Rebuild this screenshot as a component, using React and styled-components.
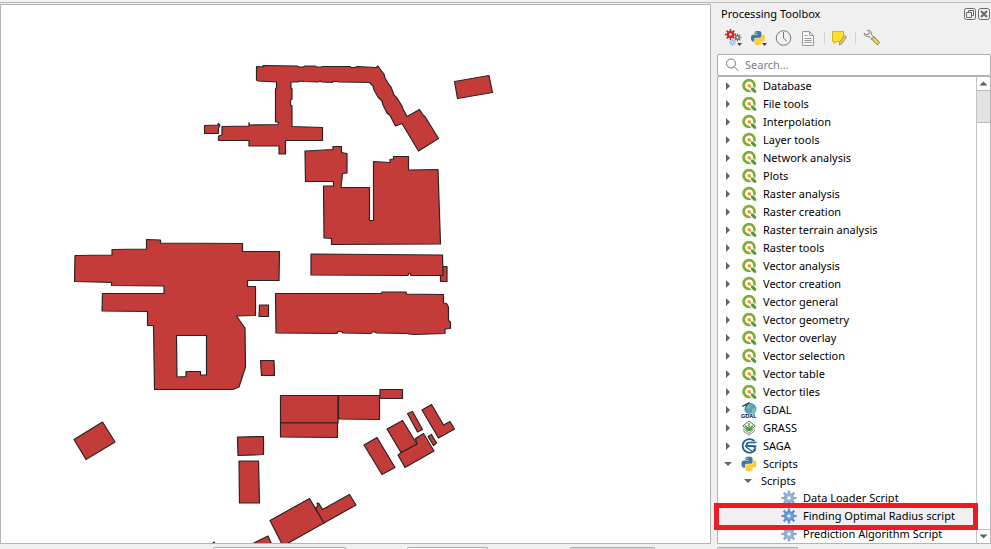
import React from "react";
import styled, { createGlobalStyle } from "styled-components";

const GlobalStyle = createGlobalStyle`
  * { box-sizing: border-box; }
  body {
    margin: 0;
    background: #f0f0f0;
    color: #000;
    font-family: "Noto Sans", "Open Sans", sans-serif;
    font-size: 11px;
  }
  button, input { font: inherit; color: inherit; }
`;

const Window = styled.div`
  display: flex;
  flex-direction: column;
  height: 100vh;
  overflow: hidden;
`;

const TopEdge = styled.div`
  flex: none;
  height: 4px;
  border-top: 2px solid #f0f0f0;
  box-shadow: inset 0 1px #b9b9b9;
`;

const Workspace = styled.div`
  display: flex;
  flex: 1;
  min-height: 0;
  gap: 6px;
`;

const MapCanvas = styled.main`
  flex: 1;
  min-width: 0;
  background: #fff;
  border: 1px solid #b4b4b4;
  overflow: hidden;
`;

const MapDrawing = styled.svg`
  display: block;
  width: 100%;
  height: 100%;
  fill: #c43c39;
  stroke: #2b2424;
  stroke-width: 1.2;
  stroke-linejoin: round;
`;

const Panel = styled.aside`
  display: flex;
  flex-direction: column;
  flex: none;
  width: 274px;
`;

const PanelHeader = styled.header`
  display: flex;
  align-items: center;
  height: 20px;
  padding: 0 1px 0 4px;
  gap: 2px;
`;

const PanelTitle = styled.h1`
  flex: 1;
  margin: 0;
  font-size: 11px;
  font-weight: 400;
  line-height: 18px;
`;

const IconButton = styled.button`
  display: flex;
  flex: none;
  align-items: center;
  justify-content: center;
  width: ${(p) => p.$size}px;
  height: ${(p) => p.$size}px;
  padding: 0;
  border: 0;
  background: none;
`;

const Toolbar = styled.div`
  display: flex;
  align-items: center;
  height: 30px;
  padding: 0 5px 2px;
  gap: 1px;
`;

const Separator = styled.span`
  width: 1px;
  height: 12px;
  margin: 0 2px;
  background: #d2d2d2;
`;

const SearchBox = styled.label`
  display: flex;
  align-items: center;
  flex: none;
  gap: 6px;
  height: 22px;
  padding: 0 7px;
  border: 1px solid #adadad;
  border-radius: 2px;
  background: #fff;
`;

const SearchInput = styled.input`
  flex: 1;
  min-width: 0;
  padding: 0;
  border: 0;
  outline: 0;
  background: none;
  line-height: 18px;
  &::placeholder { color: #7d7d7d; opacity: 1; }
`;

const TreeFrame = styled.div`
  display: flex;
  flex: 1;
  min-height: 0;
  border: 1px solid #b4b4b4;
  background: #fff;
`;

const Tree = styled.ul`
  flex: 1;
  min-width: 0;
  margin: 0;
  padding: 0;
  list-style: none;
  overflow-x: visible;
  overflow-y: clip;
`;

const TreeItem = styled.li`
  position: relative;
`;

const TreeRow = styled.button`
  display: flex;
  align-items: center;
  width: 100%;
  height: ${(p) => (p.$compact ? 16 : 18)}px;
  padding: 0 0 0 ${(p) => p.$indent}px;
  gap: 6px;
  border: 0;
  background: ${(p) => (p.$selected ? "#f0f0f0" : "none")};
  line-height: 16px;
  text-align: left;
  white-space: nowrap;
`;

const Arrow = styled.svg`
  flex: none;
  width: 12px;
  height: 12px;
  fill: #646464;
`;

const RowIcon = styled.svg`
  flex: none;
  width: 16px;
  height: 16px;
`;

const Highlight = styled.span`
  position: absolute;
  z-index: 1;
  inset: -4px -2px -5px -4px;
  border: 5px solid #ed1c24;
  pointer-events: none;
`;

const ScrollBar = styled.div`
  display: flex;
  flex-direction: column;
  flex: none;
  width: 14px;
  border-left: 1px solid #c4c4c4;
  background: #fff;
`;

const ScrollThumb = styled.div`
  height: 33px;
  border: solid #b9b9b9;
  border-width: 1px 0;
  background: #e3e3e3;
`;

const ScrollTrack = styled.div`
  flex: 1;
  border-bottom: 1px solid #c4c4c4;
`;

const StatusBar = styled.footer`
  display: grid;
  flex: none;
  grid-template-columns: 213px 133px 61px 81px 82px 85px 62px 81px 1fr;
  height: 5px;
  padding-top: 3px;
`;

const StatusField = styled.div`
  grid-column: ${(p) => p.$column};
  border: 1px solid #ababab;
  border-bottom: 0;
  border-radius: 2px 2px 0 0;
  background: ${(p) => (p.$raised ? "#dcdcdc" : "#fff")};
`;

const buildings = [
  "256.5,66.5 263,67 263,65.5 297,66 299,67 303,67 305,66 315,66 317,67 321,67 323,66.5 350,66.5 351,67.5 355,67.5 357,66.5 376,67.5 378,66 380,69 384,74 385,78 388,83 391,87 394,95 397,98 402,106 403,109 407,116.5 419.5,109.5 423,115 425,116.5 438.5,138.5 418.5,151 402,123.5 395.5,126 390,115.5 387,113 383,105 382,101 378,97 374,90 373,86 369.5,82.5 339,82 337,81.5 333,81.5 332,82.5 322,82 320,81 318,82 304,81.5 300,81 298,82 291,82 291,88 292,89 292,99 290.5,100 290.5,105 292,106 292,126.5 322.5,127.5 322.5,140.5 285.5,140.5 285.5,154 279,154 279,146 249,146 249,140.5 218.5,140.5 218.5,136 222,135 222,126.5 249,126 249,122.5 249.5,125 278,124.5 278.5,122 275.5,122 275.5,89 276.5,88 276.5,82 258,81 256.5,80",
  "204.5,125.5 218,125 218,123.5 220,125 218.5,128 218.5,133.5 204.5,133.5",
  "305,151 333,149.5 333,146.5 341.5,146.5 341.5,152.5 347,153.5 347,173 342.5,173.5 341,187.5 369.5,187.5 369.5,220.5 373.5,220.5 373.5,161.5 390,162.5 390,159.5 393.5,159 393.5,156.5 408.5,156.5 408.5,170 438,169.5 440.5,244 331.5,244.5 331.5,238.5 324,238 323.5,186 333.5,186 333.5,181.5 305.5,181.5",
  "454.5,81.5 489,75.5 492.5,92.5 457.5,98.5",
  "259.5,305 268.5,305 268.5,316.5 259,316.5",
  "260.5,360.5 274,360.5 274.5,375.5 261.5,375.5",
  "443,266.5 447,266.5 447,281.5 440.5,281.5 440.5,274",
  "311,254 442.5,255 443,275.5 411,275.5 410.5,273.5 408.5,273.5 408,275.5 311,275",
  "275.5,293.5 381.5,293.5 382,292 406,292 406.5,294 443.5,294.5 443.5,303 446.5,303.5 448.5,307 448.5,320.5 450.5,322 450.5,328.5 445,329 445,333.5 414,334.5 409,334 408,333.5 376.5,333 375,332 372,332 371,333.5 343,333 341.5,331.5 338,331.5 337,333.5 276,333",
  "280.5,395.5 338,395.5 338,423 280.5,423",
  "280.5,423 337.5,423 337.5,437.5 280.5,437",
  "338.5,395.5 379.5,395.5 379.5,419.5 338.5,419",
  "380,389.5 402.5,389.5 402.5,398.5 380,398.5",
  "364,445 377,437.5 395,467.5 382,474.5",
  "398,455 402,452 417,444 415.5,438.5 423.5,433.5 434,451 405,467.5",
  "387,429 402.5,420.5 417,444 401,452.5",
  "428,436.5 431.5,434.5 436.5,443 433.5,445.5",
  "407.5,413.5 412.5,411.5 422.5,429.5 417.5,432",
  "422,410 431.5,404.5 443.5,425 450,421.5 454.5,429 438.5,438",
  "270,520.5 309.5,498.5 324,523 283,546",
  "324,523 315.5,508 318,506 317,503 319,503.5 322.5,509.5 349.5,494.5 356,505",
  "74,439.5 102.5,422 115,442 86,459.5",
  "237.5,437 263.5,436.5 263.5,454.5 238,455.5",
  "239,461 258.5,461 259.5,503 239.5,503",
  "250,545 268,536 272,545",
  "212,544 214,542 215,544",
];

const courtyardBlock =
  "M75 255.5L112 255V249.5L146.5 249V239.5L160.5 240V243L242.5 243.5V251.5H279.5L279 280.5H247.5V286.5H255.5V315.5L236.5 316L245 328L245.5 367L239 387L233 389.5H154.5L153.5 325.5H147.5V311.5L102 311L102.5 293.5H164V286L111.5 285.5V282.5L74.5 281.5Z M176.5 335.5H206.5V375H200.5V371.5H186V376.5L177 377Z";

function gearPath(cx, cy, outer, inner, hole, teeth) {
  const step = (Math.PI * 2) / teeth;
  const at = (r, a) => `${(cx + r * Math.sin(a)).toFixed(2)} ${(cy - r * Math.cos(a)).toFixed(2)}`;
  let d = "";
  for (let i = 0; i < teeth; i += 1) {
    const a = i * step;
    d += `${i ? "L" : "M"}${at(inner, a - step * 0.26)}L${at(outer, a - step * 0.2)}L${at(outer, a + step * 0.2)}L${at(inner, a + step * 0.26)}`;
  }
  return `${d}Z M${cx - hole} ${cy}a${hole} ${hole} 0 1 0 ${hole * 2} 0a${hole} ${hole} 0 1 0 ${-hole * 2} 0Z`;
}

const snake =
  "M14.25.18l.9.2.73.26.59.3.45.32.34.34.25.34.16.33.1.3.04.26.02.2-.01.13V8.5l-.05.63-.13.55-.21.46-.26.38-.3.31-.33.25-.35.19-.35.14-.33.1-.3.07-.26.04-.21.02H8.77l-.69.05-.59.14-.5.22-.41.27-.33.32-.27.35-.2.36-.15.37-.1.35-.07.32-.04.27-.02.21v3.06H3.17l-.21-.03-.28-.07-.32-.12-.35-.18-.36-.26-.36-.36-.35-.46-.32-.59-.28-.73-.21-.88-.14-1.05-.05-1.23.06-1.22.16-1.04.24-.87.32-.71.36-.57.4-.44.42-.33.42-.24.4-.16.36-.1.32-.05.24-.01h.16l.06.01h8.16v-.83H6.18l-.01-2.75-.02-.37.05-.34.11-.31.17-.28.25-.26.31-.23.38-.2.44-.18.51-.15.58-.12.64-.1.71-.06.77-.04.84-.02 1.27.05zm-6.3 1.98l-.23.33-.08.41.08.41.23.34.33.22.41.09.41-.09.33-.22.23-.34.08-.41-.08-.41-.23-.33-.33-.22-.41-.09-.41.09z";

const PythonMark = () => (
  <>
    <path d={snake} fill="#3d78aa" />
    <path d={snake} fill="#fdc93a" transform="rotate(180 12 12)" />
  </>
);

const PythonIcon = () => (
  <RowIcon viewBox="-1 -1 26 26"><PythonMark /></RowIcon>
);

const QgisIcon = () => (
  <RowIcon viewBox="0 0 16 16">
    <circle cx="8" cy="7.5" r="5.4" fill="#fff" stroke="#7fae2c" strokeWidth="2.8" />
    <path d="M7.5 7.5h4L15.500 12v3.500h-3.300L7.500 11z" fill="#fff" />
    <path d="M10 9.500h2.200l3 3.200v2.100h-2.300L10 11.700z" fill="#589632" />
    <path d="M8.500 8.200h1.800v2.200l-1.800-1z" fill="#b5cf6a" />
    <rect x="6.700" y="6.200" width="3" height="3" rx="0.800" fill="#f08a2c" />
  </RowIcon>
);

const GdalIcon = () => (
  <RowIcon viewBox="0 0 16 16">
    <circle cx="9.5" cy="7" r="6" fill="#4aa3cf" />
    <path d="M6 3.5l3-1 1.5 2L8 7 5 6zM11 7l3-1 1 2-2 3h-2z" fill="#8cbf88" />
    <path d="M1 4.5L5 2.5M5 2.5L8.5 0.7M4 2l2 2" stroke="#333" strokeWidth="1.3" />
    <path d="M5 4l-1 5" stroke="#777" />
    <text x="0" y="15.5" fontFamily="Liberation Sans, sans-serif" fontSize="5.5" fontWeight="700" fill="#000" stroke="#fff" strokeWidth="0.8" paintOrder="stroke">GDAL</text>
  </RowIcon>
);

const GrassIcon = () => (
  <RowIcon viewBox="0 0 16 16" fill="none">
    <path d="M8 1l6.300 5L8 11 1.700 6z" fill="#f1f5ee" stroke="#6b6b6b" />
    <path d="M2 8.500l6 4.700 6-4.700M2 10.500l6 4.700 6-4.700" stroke="#8a8a8a" />
    <path d="M8 11V3M7.300 11C7 8 6 6.500 4 5.500M8.700 11C9 8 10 6.500 12 5.500M7.500 11l-3-2.700M8.500 11l3-2.700" stroke="#3f9b3c" strokeWidth="1.300" />
  </RowIcon>
);

const SagaIcon = () => (
  <RowIcon viewBox="0 0 16 16" fill="none" stroke="#1f5d93">
    <path d="M13.500 3A7 6.800 0 1 0 14.500 11.500" strokeWidth="1.800" />
    <path d="M15.500 4.500H8.500C5 4.500 5 7.600 8 8l4.500.5C15 9 14.500 12 12 12" strokeWidth="1.600" />
    <path d="M4 8h11.500M5 9l6.500 4.500" strokeWidth="1.300" />
  </RowIcon>
);

const GearIcon = ({ active }) => (
  <RowIcon viewBox="0 0 16 16">
    <path d={gearPath(8, 8, 7.6, 5.2, 1.8, 8)} fillRule="evenodd" fill={active ? "#5290d0" : "#82a6d4"} />
    <circle cx="8" cy="8" r="3.300" fill="none" stroke={active ? "#75aae0" : "#a3bfe2"} />
  </RowIcon>
);

const Caret = ({ x, y }) => <path d={`M${x} ${y}h5l-2.500 3z`} fill="#444" />;

const ModelsIcon = () => (
  <svg width="22" height="22" viewBox="0 0 22 22">
    <path d={gearPath(7.5, 7.5, 5.6, 3.9, 1.3, 8)} fillRule="evenodd" fill="#cf2b2b" />
    <path d={gearPath(14.5, 10.5, 4, 2.7, 1, 8)} fillRule="evenodd" fill="#787878" />
    <path d={gearPath(9.5, 15.5, 3.5, 2.4, 0.9, 8)} fillRule="evenodd" fill="#a5bfe6" />
    <Caret x={14} y={16} />
  </svg>
);

const PythonToolIcon = () => (
  <svg width="22" height="22" viewBox="0 0 22 22">
    <svg x="3" y="4" width="14" height="14" viewBox="0 0 24 24"><PythonMark /></svg>
    <Caret x={14} y={16} />
  </svg>
);

const HistoryIcon = () => (
  <svg width="22" height="22" viewBox="0 0 22 22" fill="none" stroke="#777">
    <circle cx="10.500" cy="11" r="7.300" />
    <path d="M10.500 5v6l3 3" />
  </svg>
);

const ResultsIcon = () => (
  <svg width="22" height="22" viewBox="0 0 22 22" fill="#f6f6f6" stroke="#9a9a9a">
    <path d="M4.500 4.500h7l4 4v10h-11zM11.500 4.500v4h4" />
    <path d="M6.500 8.500h3M6.500 11.500h7M6.500 13.500h7M6.500 15.500h7" />
  </svg>
);

const NoteIcon = () => (
  <svg width="22" height="22" viewBox="0 0 22 22">
    <path d="M3.500 4.500h11v10H8l-3 2v-2H3.500z" fill="#fbe02e" stroke="#d9b416" />
    <path d="M15.500 8.500l2 1.500-5 7-2.200 1 .2-2.500z" fill="#e8c766" stroke="#97813f" strokeWidth="0.8" />
  </svg>
);

const WrenchIcon = () => (
  <svg width="22" height="22" viewBox="0 0 22 22">
    <path d="M4 6.500C4.500 9 7 10 9 9.500l3 2.800 2-2-2.700-3C12 5 10 3 7.500 3.200L9.500 5.200 9 7l-2.200.7z" fill="#eee" stroke="#777" strokeWidth="0.9" />
    <path d="M11.500 12l2.500-2.500 5.500 6-2 2.500z" fill="#e9cf5b" stroke="#806f35" strokeWidth="0.9" />
  </svg>
);

const FrameButtonIcon = ({ kind }) => (
  <svg width="12" height="12" viewBox="0 0 12 12" fill="none" stroke="#6a6a6a">
    <rect x="0.5" y="0.5" width="11" height="11" rx="2" />
    {kind === "float" ? (
      <path d="M4.500 4.500v-2h5v5h-2M2.500 4.500h5v5h-5z" />
    ) : (
      <path d="M3 3l6 6M9 3l-6 6" strokeWidth="2" />
    )}
  </svg>
);

const Chevron = ({ up }) => (
  <svg width="13" height="13" viewBox="0 0 13 13">
    <path d={up ? "M2.500 8.500h8l-4-4z" : "M2.500 4.500h8l-4 4z"} fill="#606060" />
  </svg>
);

const groups = [
  "Database", "File tools", "Interpolation", "Layer tools", "Network analysis", "Plots",
  "Raster analysis", "Raster creation", "Raster terrain analysis", "Raster tools",
  "Vector analysis", "Vector creation", "Vector general", "Vector geometry",
  "Vector overlay", "Vector selection", "Vector table", "Vector tiles",
];

const rows = [
  ...groups.map((label) => ({ label, icon: <QgisIcon />, arrow: "closed", indent: 4 })),
  { label: "GDAL", icon: <GdalIcon />, arrow: "closed", indent: 4 },
  { label: "GRASS", icon: <GrassIcon />, arrow: "closed", indent: 4 },
  { label: "SAGA", icon: <SagaIcon />, arrow: "closed", indent: 4 },
  { label: "Scripts", icon: <PythonIcon />, arrow: "open", indent: 4 },
  { label: "Scripts", arrow: "open", indent: 24, compact: true },
  { label: "Data Loader Script", icon: <GearIcon />, indent: 63 },
  { label: "Finding Optimal Radius script", icon: <GearIcon active />, indent: 63, selected: true },
  { label: "Prediction Algorithm Script", icon: <GearIcon />, indent: 63 },
];

const Branch = styled.span`
  display: flex;
  flex: none;
  width: 13px;
`;

const IconSlot = styled.span`
  display: flex;
  flex: none;
`;

function TreeEntry({ row }) {
  return (
    <TreeItem role="treeitem" aria-selected={!!row.selected}>
      <TreeRow type="button" $indent={row.indent} $compact={row.compact} $selected={row.selected}>
        {row.arrow && (
          <Branch>
            <Arrow viewBox="0 0 12 12">
              <path d={row.arrow === "open" ? "M2 4h8L6 8z" : "M4 2v8l4-4z"} />
            </Arrow>
          </Branch>
        )}
        {row.icon && <IconSlot>{row.icon}</IconSlot>}
        {row.label}
      </TreeRow>
      {row.selected && <Highlight />}
    </TreeItem>
  );
}

export default function App() {
  return (
    <Window>
      <GlobalStyle />
      <TopEdge />
      <Workspace>
        <MapCanvas aria-label="Map">
          <MapDrawing>
            <g transform="translate(-1 -5)">
              {buildings.map((points) => <polygon key={points} points={points} />)}
              <path d={courtyardBlock} fillRule="evenodd" />
            </g>
          </MapDrawing>
        </MapCanvas>
        <Panel>
          <PanelHeader>
            <PanelTitle>Processing Toolbox</PanelTitle>
            <IconButton $size={12} aria-label="Float panel"><FrameButtonIcon kind="float" /></IconButton>
            <IconButton $size={12} aria-label="Close panel"><FrameButtonIcon kind="close" /></IconButton>
          </PanelHeader>
          <Toolbar>
            <IconButton $size={24} aria-label="Models"><ModelsIcon /></IconButton>
            <IconButton $size={24} aria-label="Python scripts"><PythonToolIcon /></IconButton>
            <IconButton $size={24} aria-label="History"><HistoryIcon /></IconButton>
            <IconButton $size={24} aria-label="Results"><ResultsIcon /></IconButton>
            <Separator />
            <IconButton $size={24} aria-label="Edit in place"><NoteIcon /></IconButton>
            <Separator />
            <IconButton $size={24} aria-label="Options"><WrenchIcon /></IconButton>
          </Toolbar>
          <SearchBox>
            <svg width="14" height="14" viewBox="0 0 14 14" fill="none" stroke="#777">
              <circle cx="6" cy="5.500" r="4.500" />
              <path d="M9.300 8.800l4 4" />
            </svg>
            <SearchInput type="text" placeholder="Search..." aria-label="Search" />
          </SearchBox>
          <TreeFrame>
            <Tree role="tree">
              {rows.map((row) => <TreeEntry key={row.label + row.indent} row={row} />)}
            </Tree>
            <ScrollBar>
              <IconButton $size={13} aria-label="Scroll up"><Chevron up /></IconButton>
              <ScrollThumb />
              <ScrollTrack />
              <IconButton $size={13} aria-label="Scroll down"><Chevron /></IconButton>
            </ScrollBar>
          </TreeFrame>
        </Panel>
      </Workspace>
      <StatusBar>
        <StatusField $column={2} />
        <StatusField $column={4} />
        <StatusField $column={6} $raised />
        <StatusField $column={8} $raised />
      </StatusBar>
    </Window>
  );
}
